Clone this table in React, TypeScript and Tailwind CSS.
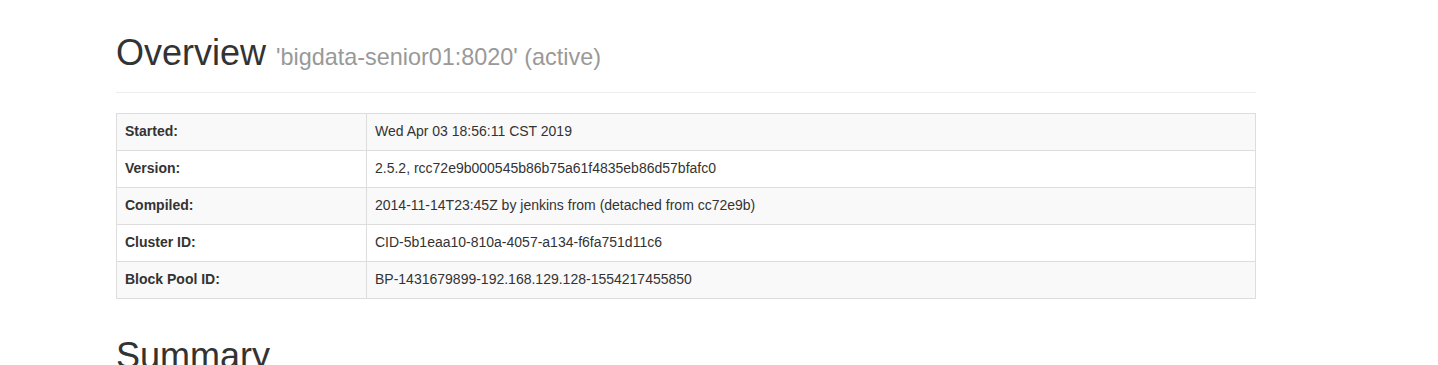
import React from "react";

const rows: [string, string][] = [
  ["Started:", "Wed Apr 03 18:56:11 CST 2019"],
  ["Version:", "2.5.2, rcc72e9b000545b86b75a61f4835eb86d57bfafc0"],
  ["Compiled:", "2014-11-14T23:45Z by jenkins from (detached from cc72e9b)"],
  ["Cluster ID:", "CID-5b1eaa10-810a-4057-a134-f6fa751d11c6"],
  ["Block Pool ID:", "BP-1431679899-192.168.129.128-1554217455850"],
];

export default function App() {
  return (
    <div
      className="w-[1438px] h-[365px] overflow-hidden bg-white text-[#333] text-[14px] leading-[1.42857]"
      style={{ fontFamily: '"Liberation Sans", Arial, Helvetica, sans-serif' }}
    >
      <div className="ml-[116px] w-[1140px] pt-[33px]">
        <div className="pb-[9px] border-b border-[#eee]">
          <h1 className="text-[36px] leading-[1.1] font-medium mb-[10px]">
            Overview{" "}
            <small className="text-[23.4px] text-[#999] font-normal leading-none">
              'bigdata-senior01:8020' (active)
            </small>
          </h1>
        </div>
        <table className="mt-[20px] w-full border-collapse border border-[#ddd]">
          <tbody>
            {rows.map(([k, v], i) => (
              <tr key={k} className={i % 2 === 0 ? "bg-[#f9f9f9]" : "bg-white"}>
                <th className="w-[250px] border border-[#ddd] p-[8px] text-left font-bold align-top">
                  {k}
                </th>
                <td className="border border-[#ddd] p-[8px] align-top">{v}</td>
              </tr>
            ))}
          </tbody>
        </table>
        <h1 className="mt-[37px] text-[36px] leading-[1.1] font-medium">Summary</h1>
      </div>
    </div>
  );
}
